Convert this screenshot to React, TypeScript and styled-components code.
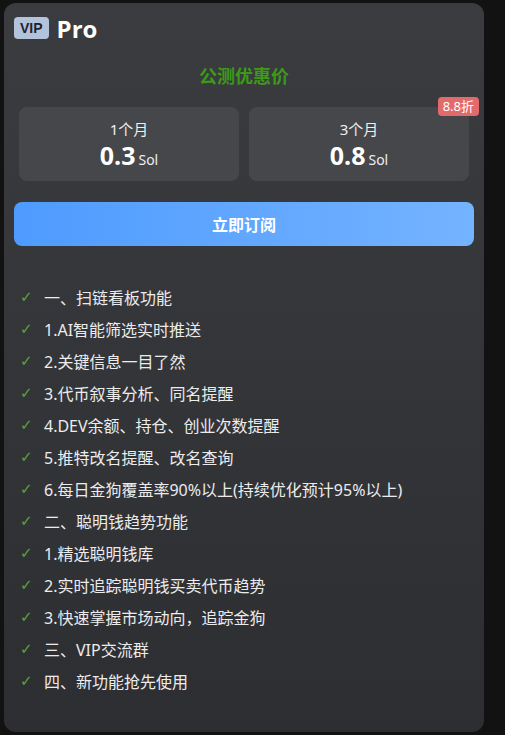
import styled, { createGlobalStyle } from 'styled-components'

interface IPlan {
  label: string
  price: string
  badge?: string
}

const plans: IPlan[] = [
  { label: '1个月', price: '0.3' },
  { label: '3个月', price: '0.8', badge: '8.8折' },
]

const features = [
  '一、扫链看板功能',
  '1.AI智能筛选实时推送',
  '2.关键信息一目了然',
  '3.代币叙事分析、同名提醒',
  '4.DEV余额、持仓、创业次数提醒',
  '5.推特改名提醒、改名查询',
  '6.每日金狗覆盖率90%以上(持续优化预计95%以上)',
  '二、聪明钱趋势功能',
  '1.精选聪明钱库',
  '2.实时追踪聪明钱买卖代币趋势',
  '3.快速掌握市场动向，追踪金狗',
  '三、VIP交流群',
  '四、新功能抢先使用',
]

const GlobalStyle = createGlobalStyle`
  html, body {
    margin: 0;
    padding: 0;
    background: #121212;
  }
  body {
    font-family: "Noto Sans", "Noto Sans CJK SC", sans-serif;
  }
  * {
    box-sizing: border-box;
  }
`

export default function App() {
  return (
    <Page>
      <GlobalStyle />
      <Card>
        <Header>
          <VipTag>VIP</VipTag>
          <PlanName>Pro</PlanName>
        </Header>
        <PromoTitle>公测优惠价</PromoTitle>
        <PlanRow>
          {plans.map((plan) => (
            <PlanCard key={plan.label}>
              {plan.badge && <Discount>{plan.badge}</Discount>}
              <PlanLabel>{plan.label}</PlanLabel>
              <PriceLine>
                <Price>{plan.price}</Price>
                <Unit>Sol</Unit>
              </PriceLine>
            </PlanCard>
          ))}
        </PlanRow>
        <SubscribeButton>立即订阅</SubscribeButton>
        <FeatureList>
          {features.map((item) => (
            <FeatureItem key={item}>
              <Check>✓</Check>
              <span>{item}</span>
            </FeatureItem>
          ))}
        </FeatureList>
      </Card>
    </Page>
  )
}

const Page = styled.div`
  padding: 3px 0 3px 4px;
`

const Card = styled.div`
  width: 480px;
  background: linear-gradient(180deg, #3b3c40 0%, #2d2e32 100%);
  border-radius: 12px;
  padding: 10px 10px 35px;
  display: flex;
  flex-direction: column;
`

const Header = styled.div`
  align-items: center;
  display: flex;
  flex-direction: row;
  gap: 8px;
  height: 30px;
`

const VipTag = styled.span`
  background: #b3c3dc;
  border-radius: 4px;
  color: #1c2331;
  font-family: "Liberation Sans", Arial, sans-serif;
  font-size: 14px;
  font-weight: bold;
  height: 22px;
  line-height: 22px;
  padding: 0 6px;
`

const PlanName = styled.span`
  color: #ffffff;
  font-family: "Open Sans", "Liberation Sans", sans-serif;
  font-size: 24px;
  font-weight: bold;
`

const PromoTitle = styled.div`
  color: #3c9a17;
  font-family: "Noto Sans CJK SC", sans-serif;
  font-size: 18px;
  font-weight: bold;
  line-height: 24px;
  margin-top: 20px;
  text-align: center;
`

const PlanRow = styled.div`
  display: grid;
  gap: 10px;
  grid-template-columns: 1fr 1fr;
  margin-top: 20px;
  padding: 0 5px;
`

const PlanCard = styled.div`
  align-items: center;
  background: #46474b;
  border-radius: 8px;
  display: flex;
  flex-direction: column;
  height: 74px;
  justify-content: center;
  position: relative;
`

const Discount = styled.span`
  background: #e36a6a;
  border-radius: 4px;
  color: #ffffff;
  font-family: "Noto Sans", "Noto Sans CJK SC", sans-serif;
  font-size: 13px;
  height: 19px;
  line-height: 19px;
  padding: 0 5px;
  position: absolute;
  right: -10px;
  top: -10px;
`

const PlanLabel = styled.div`
  color: #eeeeee;
  font-family: "Noto Sans", "Noto Sans CJK SC", sans-serif;
  font-size: 15px;
  line-height: 20px;
`

const PriceLine = styled.div`
  align-items: baseline;
  display: flex;
  flex-direction: row;
  gap: 3px;
  margin-top: 1px;
`

const Price = styled.span`
  color: #ffffff;
  font-family: "Open Sans", "Noto Sans", sans-serif;
  font-size: 25px;
  font-weight: bold;
  line-height: 30px;
`

const Unit = styled.span`
  color: #eeeeee;
  font-family: "Noto Sans", sans-serif;
  font-size: 14px;
`

const SubscribeButton = styled.button`
  background: linear-gradient(90deg, #4e9bff 0%, #74b3ff 100%);
  border: none;
  border-radius: 8px;
  color: #ffffff;
  cursor: pointer;
  font-family: "Noto Sans CJK SC", sans-serif;
  font-size: 16px;
  font-weight: bold;
  height: 44px;
  margin-top: 21px;
  width: 100%;
`

const FeatureList = styled.ul`
  list-style: none;
  margin: 35px 0 0;
  padding: 0 0 0 6px;
`

const FeatureItem = styled.li`
  align-items: center;
  color: #ececec;
  display: flex;
  flex-direction: row;
  font-family: "Noto Sans", "Noto Sans CJK SC", sans-serif;
  font-size: 16px;
  height: 32px;
`

const Check = styled.span`
  color: #62a13c;
  font-family: "DejaVu Sans", sans-serif;
  font-size: 15px;
  width: 24px;
`
